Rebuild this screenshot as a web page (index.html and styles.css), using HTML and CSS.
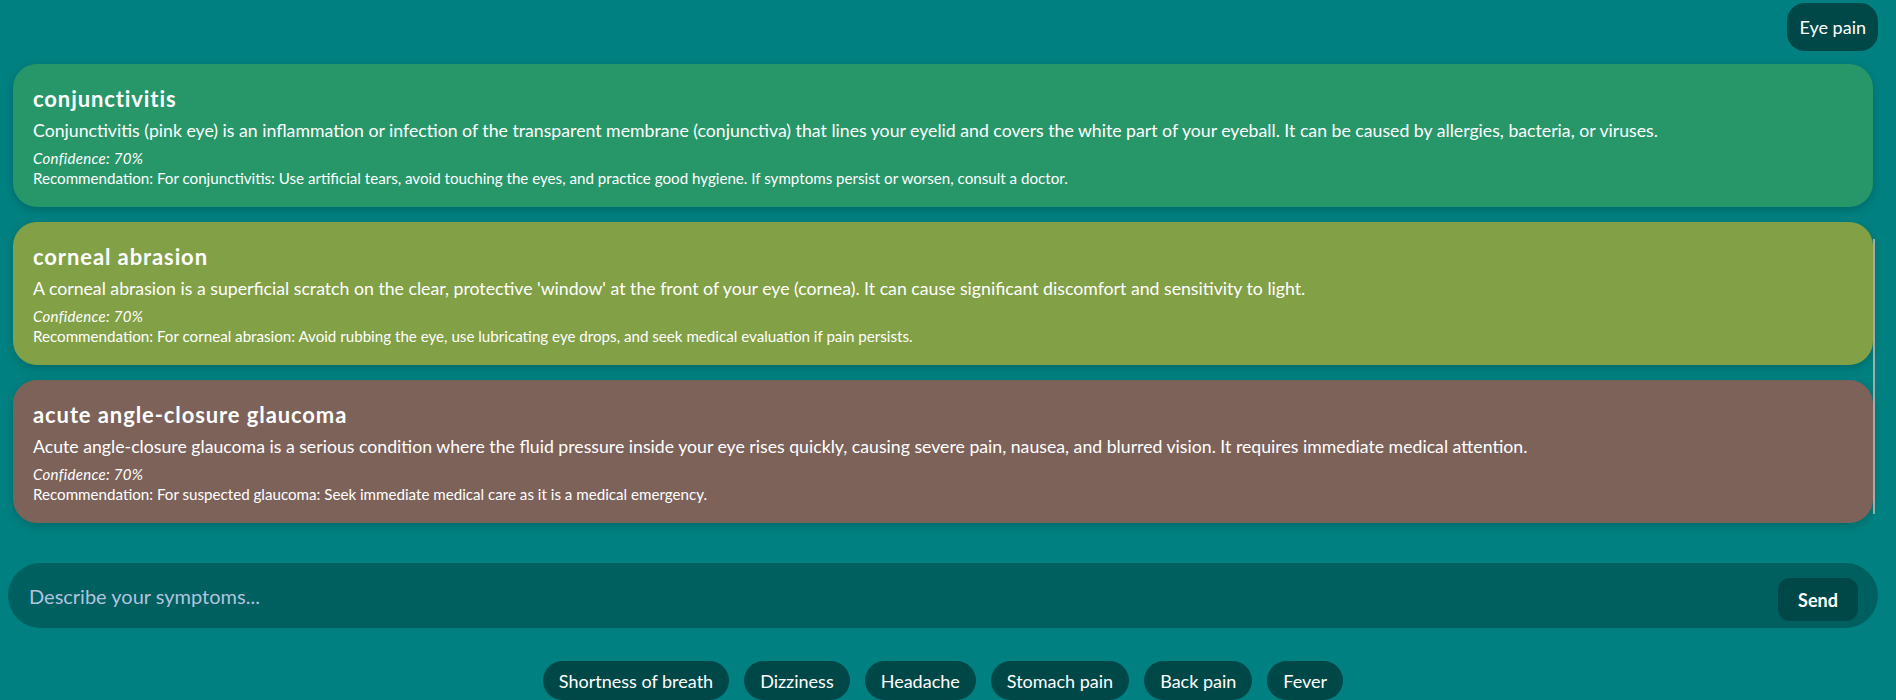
FILE: index.html
```html
<!DOCTYPE html>
<html lang="en">
<head>
    <meta charset="UTF-8">
    <meta name="viewport" content="width=device-width, initial-scale=1.0">
    <title>Symptom Checker</title>
    <link rel="stylesheet" href="styles.css">
</head>
<body>
    <div class="chat">
        <div class="messages">
            <div class="user-row">
                <span class="user-bubble">Eye pain</span>
            </div>

            <div class="result result-green">
                <h3>conjunctivitis</h3>
                <p class="desc">Conjunctivitis (pink eye) is an inflammation or infection of the transparent membrane (conjunctiva) that lines your eyelid and covers the white part of your eyeball. It can be caused by allergies, bacteria, or viruses.</p>
                <p class="confidence">Confidence: 70%</p>
                <p class="recommendation">Recommendation: For conjunctivitis: Use artificial tears, avoid touching the eyes, and practice good hygiene. If symptoms persist or worsen, consult a doctor.</p>
            </div>

            <div class="result result-olive">
                <h3>corneal abrasion</h3>
                <p class="desc">A corneal abrasion is a superficial scratch on the clear, protective 'window' at the front of your eye (cornea). It can cause significant discomfort and sensitivity to light.</p>
                <p class="confidence">Confidence: 70%</p>
                <p class="recommendation">Recommendation: For corneal abrasion: Avoid rubbing the eye, use lubricating eye drops, and seek medical evaluation if pain persists.</p>
            </div>

            <div class="result result-brown">
                <h3>acute angle-closure glaucoma</h3>
                <p class="desc">Acute angle-closure glaucoma is a serious condition where the fluid pressure inside your eye rises quickly, causing severe pain, nausea, and blurred vision. It requires immediate medical attention.</p>
                <p class="confidence">Confidence: 70%</p>
                <p class="recommendation">Recommendation: For suspected glaucoma: Seek immediate medical care as it is a medical emergency.</p>
            </div>

            <div class="scroll-thumb"></div>
        </div>

        <form class="input-bar" onsubmit="return false;">
            <input type="text" placeholder="Describe your symptoms...">
            <button type="submit">Send</button>
        </form>

        <div class="chips">
            <button class="chip">Shortness of breath</button>
            <button class="chip">Dizziness</button>
            <button class="chip">Headache</button>
            <button class="chip">Stomach pain</button>
            <button class="chip">Back pain</button>
            <button class="chip">Fever</button>
        </div>
    </div>
</body>
</html>
```

FILE: styles.css
```css
body {
    margin: 0;
    background: #008080;
    font-family: Lato, "Liberation Sans", sans-serif;
    color: white;
    overflow: hidden;
}
.chat {
    padding: 3px 18px 0 8px;
}
.messages {
    position: relative;
}
.user-row {
    display: flex;
    justify-content: flex-end;
    margin-bottom: 13px;
}
.user-bubble {
    background: #004848;
    border-radius: 18px;
    padding: 0 12px;
    height: 48px;
    line-height: 48px;
    font-size: 18px;
}
.result {
    margin: 0 5px 15px;
    padding: 22px 20px 19px;
    border-radius: 24px;
    box-shadow: 0 3px 8px rgba(0, 0, 0, 0.18);
}
.result-green {
    background: #27976a;
}
.result-olive {
    background: #82a046;
}
.result-brown {
    background: #7d625a;
}
.result h3 {
    margin: 0 0 7px;
    font-size: 22px;
    line-height: 26px;
    letter-spacing: 0.9px;
    font-weight: bold;
}
.result p {
    margin: 0;
}
.desc {
    font-size: 17.7px;
    line-height: 24px;
}
.confidence {
    margin-top: 5px !important;
    font-size: 15px;
    line-height: 20px;
    letter-spacing: 0.3px;
    font-style: italic;
}
.recommendation {
    font-size: 15.15px;
    line-height: 20px;
}
.scroll-thumb {
    position: absolute;
    right: 3px;
    top: 236px;
    width: 2px;
    height: 275px;
    background: #a9a9a9;
}
.input-bar {
    display: flex;
    align-items: center;
    height: 65px;
    margin-top: 40px;
    padding: 0 20px 0 21px;
    background: #005f5f;
    border-radius: 33px;
}
.input-bar input {
    flex: 1;
    background: transparent;
    border: none;
    outline: none;
    color: white;
    font-family: inherit;
    font-size: 20px;
    padding: 0;
}
.input-bar input::placeholder {
    color: #b0c4de;
}
.input-bar button {
    margin-top: 8px;
    width: 80px;
    height: 43px;
    background: #004848;
    color: white;
    border: none;
    border-radius: 12px;
    font-family: inherit;
    font-size: 18px;
    font-weight: bold;
    cursor: pointer;
}
.chips {
    display: flex;
    justify-content: center;
    gap: 15px;
    margin-top: 33px;
}
.chip {
    height: 39px;
    padding: 0 16px;
    background: #004848;
    color: white;
    border: none;
    border-radius: 20px;
    font-family: inherit;
    font-size: 18px;
    cursor: pointer;
}
```
